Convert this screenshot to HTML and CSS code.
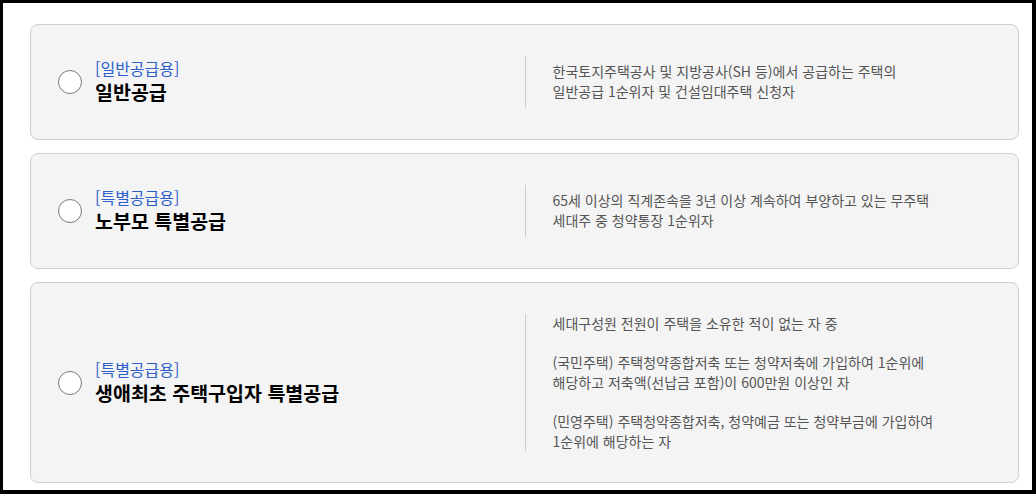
FILE: index.html
```html
<!DOCTYPE html>
<html lang="ko">
  <head>
    <meta charset="UTF-8" />
    <meta name="viewport" content="width=device-width, initial-scale=1.0" />
    <title>공급유형 선택</title>
    <link rel="stylesheet" href="styles.css">
  </head>
  <body>
    <div class="frame">
      <div class="supply-list">
        <label class="supply-card">
          <div class="supply-left">
            <span class="radio"></span>
            <div class="supply-name">
              <span class="supply-tag">[일반공급용]</span>
              <strong class="supply-title">일반공급</strong>
            </div>
          </div>
          <div class="supply-desc">
            <p>한국토지주택공사 및 지방공사(SH 등)에서 공급하는 주택의<br />일반공급 1순위자 및 건설임대주택 신청자</p>
          </div>
        </label>

        <label class="supply-card">
          <div class="supply-left">
            <span class="radio"></span>
            <div class="supply-name">
              <span class="supply-tag">[특별공급용]</span>
              <strong class="supply-title">노부모 특별공급</strong>
            </div>
          </div>
          <div class="supply-desc">
            <p>65세 이상의 직계존속을 3년 이상 계속하여 부양하고 있는 무주택<br />세대주 중 청약통장 1순위자</p>
          </div>
        </label>

        <label class="supply-card">
          <div class="supply-left">
            <span class="radio"></span>
            <div class="supply-name">
              <span class="supply-tag">[특별공급용]</span>
              <strong class="supply-title">생애최초 주택구입자 특별공급</strong>
            </div>
          </div>
          <div class="supply-desc">
            <p>세대구성원 전원이 주택을 소유한 적이 없는 자 중<br /><br />(국민주택) 주택청약종합저축 또는 청약저축에 가입하여 1순위에<br />해당하고 저축액(선납금 포함)이 600만원 이상인 자<br /><br />(민영주택) 주택청약종합저축, 청약예금 또는 청약부금에 가입하여<br />1순위에 해당하는 자</p>
          </div>
        </label>
      </div>
    </div>
  </body>
</html>
```

FILE: styles.css
```css
html,
body {
  margin: 0;
  padding: 0;
  background: #000;
}
body {
  font-family: "Noto Sans CJK KR", "Noto Sans", sans-serif;
  color: #111;
}
.frame {
  box-sizing: border-box;
  width: 1036px;
  height: 494px;
  border-style: solid;
  border-color: #000;
  border-width: 3px 4px 4px 3px;
  background: #fff;
  padding: 21px 13px 0 27px;
  overflow: hidden;
}
.supply-list {
  display: flex;
  flex-direction: column;
  gap: 13px;
}
.supply-card {
  display: grid;
  grid-template-columns: 1fr 1fr;
  align-items: center;
  padding: 31px 0;
  background: #f4f4f4;
  border: 1px solid #cfcfcf;
  border-radius: 8px;
  cursor: pointer;
}
.supply-left {
  display: flex;
  align-items: center;
  gap: 13px;
  padding-left: 27px;
}
.radio {
  flex: none;
  width: 22px;
  height: 22px;
  border: 1px solid #777;
  border-radius: 50%;
  background: #fff;
}
.supply-name {
  display: flex;
  flex-direction: column;
  padding-bottom: 2px;
}
.supply-tag {
  color: #2c5fcb;
  font-size: 16px;
  line-height: 22px;
}
.supply-title {
  font-size: 19.5px;
  font-weight: 700;
  line-height: 26px;
  color: #000;
}
.supply-desc {
  display: flex;
  align-items: center;
  min-height: 52px;
  border-left: 1px solid #ccc;
  padding-left: 27px;
}
.supply-desc p {
  margin: 0;
  font-size: 14px;
  line-height: 1.4;
  color: #555;
}
```
